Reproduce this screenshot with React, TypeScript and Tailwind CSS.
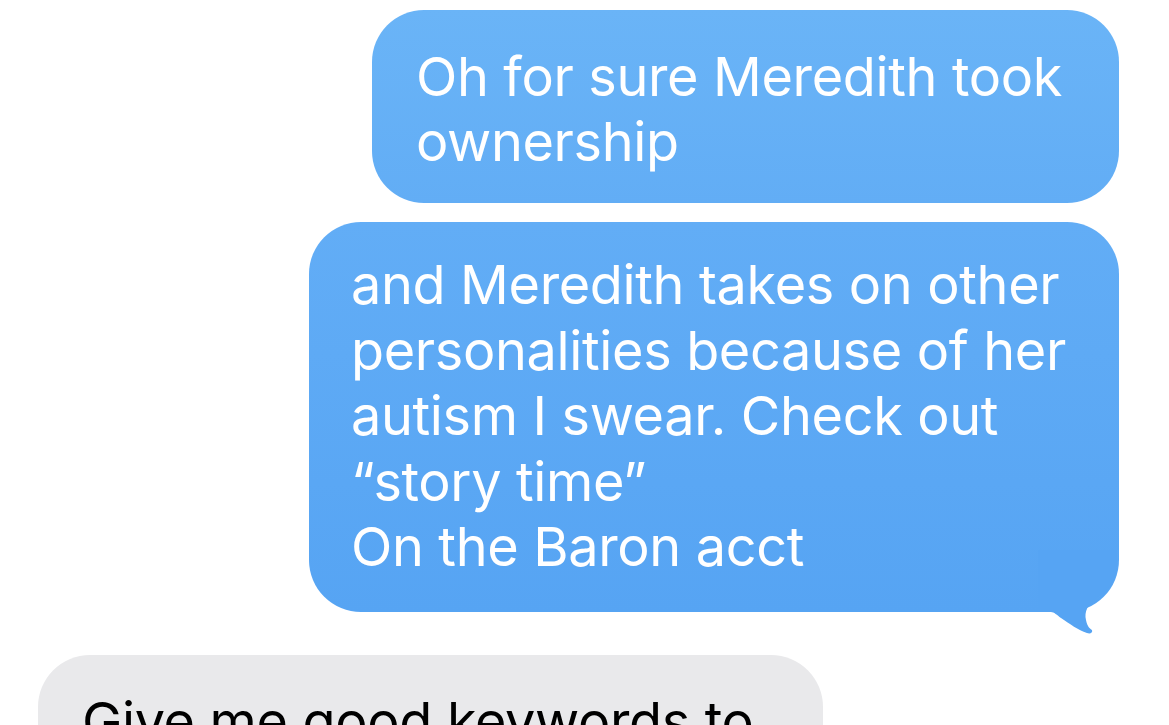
const font = { fontFamily: "Inter, 'Noto Sans', sans-serif" };

const Tail = () => (
  <svg
    className="absolute right-[1px] bottom-[-28px]"
    width="80"
    height="90"
    viewBox="0 0 80 90"
  >
    <path
      d="M0 0 H79 V10 C79 30 72 40 58 48 C50 54 46 62 48 70 C49 76 52 79 54 80 C55 83 52 84 49 83 C40 80 32 74 23 68 C19 65 16 62 13 62 H0 Z"
      fill="#56a4f3"
    />
  </svg>
);

export default function App() {
  return (
    <div
      className="w-[1169px] h-[725px] overflow-hidden bg-white flex flex-col"
      style={font}
    >
      <div className="flex flex-col items-end pr-[50px] pt-[10px]">
        <div className="w-[747px] h-[193px] rounded-[52px] bg-gradient-to-b from-[#6ab4f7] to-[#62adf5] pl-[44px] pt-[34px] text-white text-[54px] leading-[65px] tracking-[-0.35px]">
          Oh for sure Meredith took
          <br />
          ownership
        </div>
        <div className="relative mt-[19px] w-[810px] h-[390px] rounded-[52px] bg-gradient-to-b from-[#62adf6] to-[#56a4f3] pl-[42px] pt-[30px] text-white text-[54px] leading-[65.5px] tracking-[-0.35px]">
          and Meredith takes on other
          <br />
          personalities because of her
          <br />
          autism I swear. Check out
          <br />
          “story time”
          <br />
          On the Baron acct
          <Tail />
        </div>
      </div>
      <div className="pl-[38px] mt-[43px]">
        <div className="w-[785px] h-[140px] rounded-[52px] bg-[#e9e9eb] pl-[44px] pt-[34px] text-black text-[54px] leading-[65px] tracking-[-0.35px]">
          Give me good keywords to
        </div>
      </div>
    </div>
  );
}
